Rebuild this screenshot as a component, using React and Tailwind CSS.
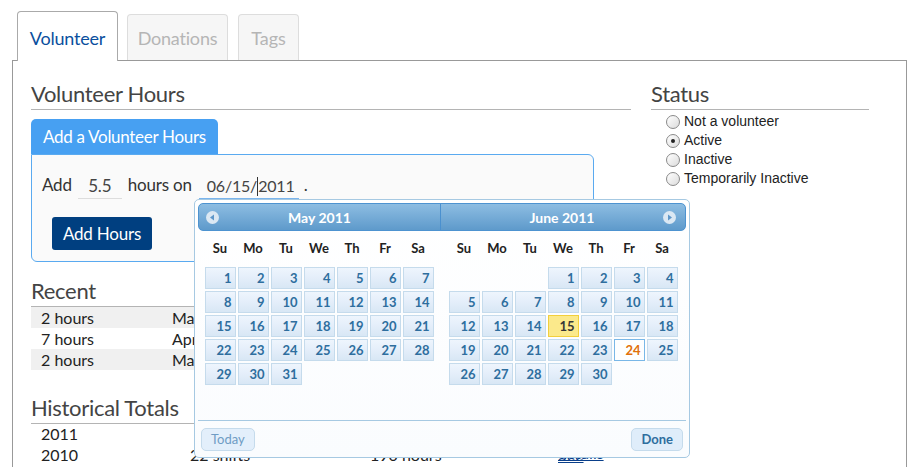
const MAY = [
  [1, 2, 3, 4, 5, 6, 7],
  [8, 9, 10, 11, 12, 13, 14],
  [15, 16, 17, 18, 19, 20, 21],
  [22, 23, 24, 25, 26, 27, 28],
  [29, 30, 31, null, null, null, null],
];

const JUNE = [
  [null, null, null, 1, 2, 3, 4],
  [5, 6, 7, 8, 9, 10, 11],
  [12, 13, 14, 15, 16, 17, 18],
  [19, 20, 21, 22, 23, 24, 25],
  [26, 27, 28, 29, 30, null, null],
];

const DAYS = ["Su", "Mo", "Tu", "We", "Th", "Fr", "Sa"];

function DayCell({ day, selected, today }) {
  if (!day) return <div className="h-[22px]" />;
  let cls =
    "border-[#c5dbec] bg-gradient-to-b from-[#eef5fd] via-[#e4eefa] to-[#d8e7f5] text-[#2e6e9e]";
  if (selected) cls = "border-[#f2cf3c] bg-[#fbe98b] text-[#363636]";
  if (today) cls = "border-[#79b7e7] bg-[#fdfeff] text-[#e17009]";
  return (
    <div
      className={`h-[22px] border text-right pr-[3px] text-[13px] font-bold leading-[20px] ${cls}`}
    >
      {day}
    </div>
  );
}

function Month({ weeks, selected, today, className }) {
  return (
    <div className={`flex justify-center ${className}`}>
      <div className="w-[229px]">
        <div className="grid grid-cols-7 gap-x-[2px] h-[36px] items-center">
          {DAYS.map((d) => (
            <div key={d} className="text-center text-[13px] font-bold text-[#222]">
              {d}
            </div>
          ))}
        </div>
        <div className="grid grid-cols-7 gap-[2px] h-[152px] content-start">
          {weeks.flat().map((d, i) => (
            <DayCell key={i} day={d} selected={d === selected} today={d === today} />
          ))}
        </div>
      </div>
    </div>
  );
}

function Arrow({ dir }) {
  return (
    <svg width="13" height="13" viewBox="0 0 13 13">
      <circle cx="6.5" cy="6.5" r="6.5" fill="#dbe8f3" />
      {dir === "left" ? (
        <path d="M4 6.5 L8 3.5 L8 9.5 Z" fill="#5f97c9" />
      ) : (
        <path d="M9 6.5 L5 3.5 L5 9.5 Z" fill="#5f97c9" />
      )}
    </svg>
  );
}

function DatePicker() {
  return (
    <div className="absolute left-[194px] top-[199px] w-[496px] h-[259px] border border-[#a6c9e2] rounded-[5px] bg-gradient-to-b from-white to-[#fafcfe] p-[3px] flex flex-col">
      <div className="h-[28px] flex rounded-[5px] border border-[#4d93d0] bg-gradient-to-b from-[#8dbde2] to-[#5e9acb] text-white font-bold text-[14px]">
        <div className="w-[241px] flex items-center pl-[7px]">
          <Arrow dir="left" />
          <div className="flex-1 text-center pr-[20px]">May 2011</div>
        </div>
        <div className="flex-1 flex items-center border-l border-[#4a90cf] pr-[9px]">
          <div className="flex-1 text-center pl-[20px]">June 2011</div>
          <Arrow dir="right" />
        </div>
      </div>
      <div className="flex">
        <Month weeks={MAY} className="w-[242px]" />
        <Month weeks={JUNE} selected={15} today={24} className="flex-1" />
      </div>
      <div className="border-t border-[#a6c9e2] mt-auto pt-[7px] pb-[3px] px-[3px] flex justify-between">
        <div className="h-[23px] px-[9px] leading-[21px] border border-[#c5dbec] bg-[#e3effb] rounded-[5px] text-[13px] text-[#6f9cc4]">
          Today
        </div>
        <div className="h-[23px] px-[9px] leading-[21px] border border-[#c5dbec] bg-[#dfedfa] rounded-[5px] text-[13px] font-bold text-[#2e6e9e]">
          Done
        </div>
      </div>
    </div>
  );
}

function Radio({ checked }) {
  return (
    <div className="w-[14px] h-[14px] rounded-full border border-[#8a8a8a] bg-gradient-to-br from-white to-[#dcdcdc] flex items-center justify-center">
      {checked && <div className="w-[4px] h-[4px] rounded-full bg-[#222]" />}
    </div>
  );
}

function Heading({ children }) {
  return (
    <div className="text-[22px] leading-[26px] pb-[2px] border-b border-[#b4b4b4] text-[#444] tracking-[-0.3px]">
      {children}
    </div>
  );
}

export default function App() {
  const recent = [
    ["2 hours", "May 10, 2011"],
    ["7 hours", "April 28, 2011"],
    ["2 hours", "March 15, 2011"],
  ];

  return (
    <div
      className="relative w-[919px] h-[467px] overflow-hidden bg-white"
      style={{ fontFamily: "Lato, 'Open Sans', sans-serif" }}
    >
      <div className="pl-[12px] pt-[11px]">
        {/* Tabs */}
        <div className="flex items-end gap-[9px] pl-[5px] -mb-px relative z-10">
          <div className="h-[50px] w-[101px] border border-b-0 border-[#aaa] rounded-t-[4px] bg-white text-[18px] tracking-[-0.2px] text-[#0a4f9e] leading-[52px] text-center">
            Volunteer
          </div>
          <div className="h-[46px] w-[101px] mb-px border border-b-0 border-[#ddd] rounded-t-[4px] bg-[#f6f6f6] text-[18px] tracking-[-0.2px] text-[#b5b5b5] leading-[46px] text-center">
            Donations
          </div>
          <div className="h-[46px] w-[61px] mb-px ml-px border border-b-0 border-[#ddd] rounded-t-[4px] bg-[#f6f6f6] text-[18px] text-[#b5b5b5] leading-[46px] text-center">
            Tags
          </div>
        </div>

        {/* Panel */}
        <div className="w-[895px] h-[460px] border border-[#999] flex pl-[18px] pt-[20px]">
          <div className="w-[600px]">
            <Heading>Volunteer Hours</Heading>

            <div className="mt-[9px]">
              <div className="inline-block h-[35px] px-[12px] leading-[35px] text-[17px] tracking-[-0.3px] text-white bg-[#47a0f2] rounded-t-[5px]">
                Add a Volunteer Hours
              </div>
              <div className="w-[563px] h-[108px] border border-[#5aaaf0] rounded-b-[6px] rounded-tr-[6px] bg-[#fafafa] pl-[10px]">
                <div className="flex items-end h-[44px] text-[17px] tracking-[-0.2px] text-[#333]">
                  <span className="pb-[2px]">Add</span>
                  <span className="ml-[6px] w-[44px] border-b border-[#ddd] text-center text-[17px] text-[#444]">
                    5.5
                  </span>
                  <span className="ml-[6px] pb-[2px]">hours on</span>
                  <span className="ml-[7px] w-[100px] border-b border-[#7ab4ec] pl-[8px] text-[16px] tracking-[-0.2px] text-[#444] flex items-center h-[25px]">
                    06/15/
                    <span className="inline-block w-px h-[19px] bg-[#333]" />
                    2011
                  </span>
                  <span className="ml-[5px] pb-[2px]">.</span>
                </div>
                <div className="mt-[18px] ml-[10px] w-[100px] h-[33px] rounded-[3px] bg-[#003f80] text-white text-[17px] tracking-[-0.2px] leading-[33px] text-center">
                  Add Hours
                </div>
              </div>
            </div>

            <div className="mt-[16px]">
              <Heading>Recent</Heading>
            </div>
            <div className="text-[16px] text-[#222]">
              {recent.map((r, i) => (
                <div
                  key={i}
                  className={`h-[21px] leading-[21px] pl-[10px] flex ${i % 2 === 0 ? "bg-[#f0f0f0]" : ""}`}
                >
                  <span className="w-[131px]">{r[0]}</span>
                  <span>{r[1]}</span>
                </div>
              ))}
            </div>

            <div className="mt-[25px]">
              <Heading>Historical Totals</Heading>
            </div>
            <div className="text-[16px] text-[#222]">
              <div className="h-[21px] leading-[19px] pl-[10px] grid grid-cols-[149px_180px_188px_auto]">
                <span>2011</span>
                <span />
                <span />
                <span className="underline text-[#0a3f8a]">See details</span>
              </div>
              <div className="h-[21px] leading-[19px] pl-[10px] grid grid-cols-[149px_180px_188px_auto]">
                <span>2010</span>
                <span>22 shifts</span>
                <span>190 hours</span>
                <span className="underline text-[#0a3f8a]">See details</span>
              </div>
            </div>
          </div>

          <div className="w-[218px] ml-[20px]">
            <Heading>Status</Heading>
            <div
              className="mt-[2px] pl-[15px] text-[14px] text-[#222]"
              style={{ fontFamily: "'Liberation Sans', Arial, sans-serif" }}
            >
              {["Not a volunteer", "Active", "Inactive", "Temporarily Inactive"].map((s) => (
                <div key={s} className="h-[19px] flex items-center gap-[4px]">
                  <Radio checked={s === "Active"} />
                  <span>{s}</span>
                </div>
              ))}
            </div>
          </div>
        </div>
      </div>

      <DatePicker />
    </div>
  );
}
